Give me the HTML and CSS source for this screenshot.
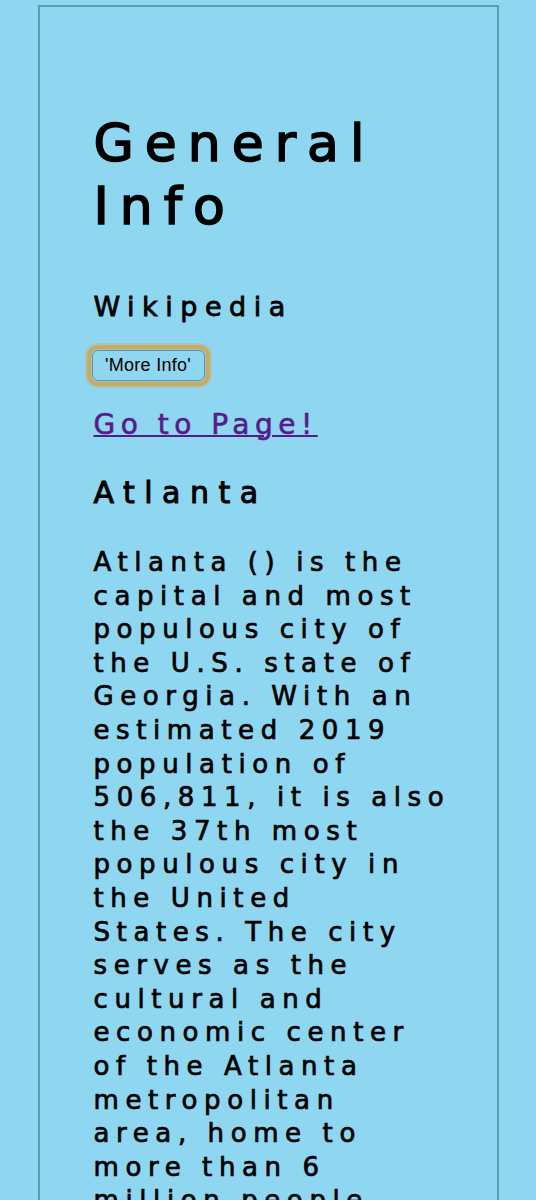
FILE: index.html
```html
<!DOCTYPE html>
<html lang="en">
<head>
<meta charset="utf-8">
<title>General Info</title>
<link rel="stylesheet" href="styles.css">
</head>
<body>
<main class="card">
  <h1 class="title">General<br>Info</h1>
  <h2 class="source">Wikipedia</h2>
  <button class="more" type="button">'More Info'</button>
  <a class="go" href="#">Go to Page!</a>
  <h2 class="city">Atlanta</h2>
  <p class="summary">Atlanta () is the<br>capital and most<br>populous city of<br>the U.S. state of<br>Georgia. With an<br>estimated 2019<br>population of<br>506,811, it is also<br>the 37th most<br>populous city in<br>the United<br>States. The city<br>serves as the<br>cultural and<br>economic center<br>of the Atlanta<br>metropolitan<br>area, home to<br>more than 6<br>million people.</p>
</main>
</body>
</html>
```
FILE: styles.css
```css
html, body {
  margin: 0;
  padding: 0;
  background: #8fd6f0;
}
body {
  font-family: "DejaVu Sans", "Lato", sans-serif;
  color: #000;
}
.card {
  box-sizing: border-box;
  width: 461px;
  margin: 5px auto 0;
  border: 2px solid #5a9bb0;
  padding: 105px 20px 0 54px;
  min-height: 1300px;
}
.title {
  margin: 0;
  font-size: 52px;
  line-height: 63px;
  font-weight: normal;
  letter-spacing: 11px;
  -webkit-text-stroke: 1.6px #000;
}
.source {
  margin: 52px 0 0;
  font-size: 27px;
  line-height: 34px;
  font-weight: normal;
  letter-spacing: 7.5px;
  -webkit-text-stroke: 0.8px #000;
}
.more {
  display: block;
  margin: 26px 0 0 -2px;
  box-sizing: border-box;
  width: 113px;
  height: 31px;
  padding: 0;
  background: #8fd6f0;
  border: 1px solid #5a94a8;
  border-radius: 6px;
  outline: 4px solid #c9aa62;
  outline-offset: 1px;
  box-shadow: 0 0 0 7px rgba(201, 170, 98, 0.35);
  font-family: "Liberation Sans", Arial, sans-serif;
  font-size: 18px;
  letter-spacing: 0.3px;
  color: #000;
}
.go {
  display: block;
  width: fit-content;
  margin-top: 27px;
  font-size: 28px;
  line-height: 34px;
  letter-spacing: 5.5px;
  color: #551a8b;
  text-decoration: underline;
  text-decoration-thickness: 2px;
  -webkit-text-stroke: 0.6px #551a8b;
}
.city {
  margin: 33px 0 0;
  font-size: 30px;
  line-height: 36px;
  font-weight: normal;
  letter-spacing: 9.5px;
  -webkit-text-stroke: 1px #000;
}
.summary {
  margin: 35px 0 0;
  font-size: 26px;
  line-height: 33.6px;
  font-weight: normal;
  letter-spacing: 6.6px;
  -webkit-text-stroke: 0.7px #000;
}
```
